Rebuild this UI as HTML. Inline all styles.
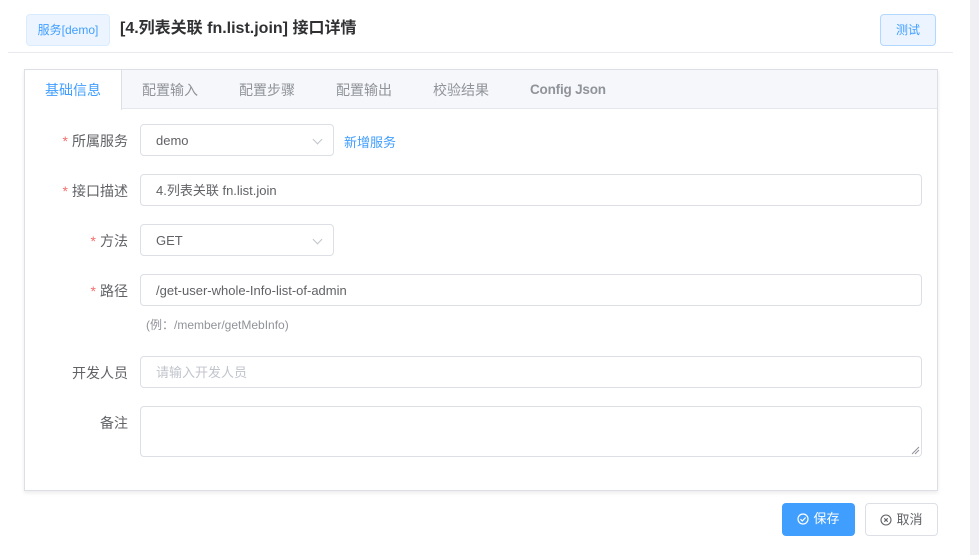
<!DOCTYPE html>
<html><head><meta charset="utf-8"><style>
*{box-sizing:border-box;margin:0;padding:0}
body{width:979px;height:555px;background:#fff;font-family:"Liberation Sans","Noto Sans CJK SC",sans-serif;font-size:13px;color:#606266;position:relative;overflow:hidden}
.abs{position:absolute}
.strip{left:970px;top:0;width:9px;height:555px;background:#f0f0f4}
.hline{left:8px;top:52px;width:945px;height:1px;background:#e8eaf0}
.tag{left:26px;top:14px;width:84px;height:32px;border:1px solid #d9ecff;background:#ecf5ff;color:#409eff;border-radius:4px;font-size:12px;text-align:center;line-height:30px}
.title{left:120px;top:18px;font-size:16px;font-weight:bold;color:#303133;line-height:22px}
.test{left:880px;top:14px;width:56px;height:32px;border:1px solid #b3d8ff;background:#ecf5ff;color:#409eff;border-radius:4px;font-size:12px;text-align:center;line-height:30px}
.card{left:24px;top:69px;width:914px;height:422px;border:1px solid #dcdfe6;box-shadow:0 2px 4px rgba(0,0,0,.08)}
.tabs{left:0;top:0;width:912px;height:39px;background:#f5f7fa;border-bottom:1px solid #e4e7ed}
.tab{position:absolute;top:0;height:39px;line-height:40px;font-size:14px;color:#909399}
.tab.on{background:#fff;color:#409eff;border-right:1px solid #dcdfe6;height:40px;left:0;width:97px;text-align:center}
.lbl{position:absolute;font-size:14px;color:#606266;text-align:right;white-space:nowrap}
.lbl i{color:#f56c6c;font-style:normal;margin-right:4px}
.inp{position:absolute;left:140px;height:32px;border:1px solid #dcdfe6;border-radius:4px;padding-left:15px;line-height:32px;font-size:13px;color:#606266}
.arr{position:absolute;right:12px;top:11px;width:7px;height:7px;border-right:1px solid #c0c4cc;border-bottom:1px solid #c0c4cc;transform:rotate(45deg)}
.btn{position:absolute;top:503px;height:33px;border-radius:4px;font-size:13px;line-height:32px;text-align:center}
</style></head><body>
<div class="abs strip"></div>
<div class="abs tag">服务[demo]</div>
<div class="abs title">[4.列表关联 fn.list.join] 接口详情</div>
<div class="abs test">测试</div>
<div class="abs hline"></div>
<div class="abs card">
 <div class="abs tabs">
  <div class="tab on">基础信息</div>
  <div class="tab" style="left:117px">配置输入</div>
  <div class="tab" style="left:214px">配置步骤</div>
  <div class="tab" style="left:311px">配置输出</div>
  <div class="tab" style="left:408px">校验结果</div>
  <div class="tab" style="left:505px;font-weight:bold;font-size:13.5px;letter-spacing:-0.2px">Config Json</div>
 </div>
</div>
<div class="lbl" style="top:131px;right:851px"><i>*</i>所属服务</div>
<div class="inp" style="top:124px;width:194px">demo<span class="arr"></span></div>
<div class="abs" style="left:344px;top:132px;color:#409eff;font-size:13px">新增服务</div>
<div class="lbl" style="top:181px;right:851px"><i>*</i>接口描述</div>
<div class="inp" style="top:174px;width:782px">4.列表关联 fn.list.join</div>
<div class="lbl" style="top:231px;right:851px"><i>*</i>方法</div>
<div class="inp" style="top:224px;width:194px">GET<span class="arr"></span></div>
<div class="lbl" style="top:281px;right:851px"><i>*</i>路径</div>
<div class="inp" style="top:274px;width:782px">/get-user-whole-Info-list-of-admin</div>
<div class="abs" style="left:146px;top:316px;font-size:12px;color:#909399">(例：/member/getMebInfo)</div>
<div class="lbl" style="top:363px;right:851px">开发人员</div>
<div class="inp" style="top:356px;width:782px;color:#c0c4cc">请输入开发人员</div>
<div class="lbl" style="top:413px;right:851px">备注</div>
<div class="inp" style="top:406px;width:782px;height:51px"><svg style="position:absolute;right:1px;bottom:1px" width="9" height="9"><path d="M1 8L8 1M4 8L8 4" stroke="#909399" stroke-width="1"/></svg></div>
<div class="btn" style="left:782px;width:73px;background:#409eff;color:#fff"><svg width="12" height="12" style="vertical-align:-2px;margin-right:4px"><circle cx="6" cy="6" r="5" fill="none" stroke="#fff" stroke-width="1.2"/><path d="M3.5 6.2L5.3 8L8.6 4.5" fill="none" stroke="#fff" stroke-width="1.2"/></svg>保存</div>
<div class="btn" style="left:865px;width:73px;border:1px solid #dcdfe6;color:#606266;background:#fff"><svg width="12" height="12" style="vertical-align:-2px;margin-right:4px"><circle cx="6" cy="6" r="5" fill="none" stroke="#606266" stroke-width="1.1"/><path d="M4.3 4.3L7.7 7.7M7.7 4.3L4.3 7.7" stroke="#606266" stroke-width="1.1"/></svg>取消</div>
</body></html>
